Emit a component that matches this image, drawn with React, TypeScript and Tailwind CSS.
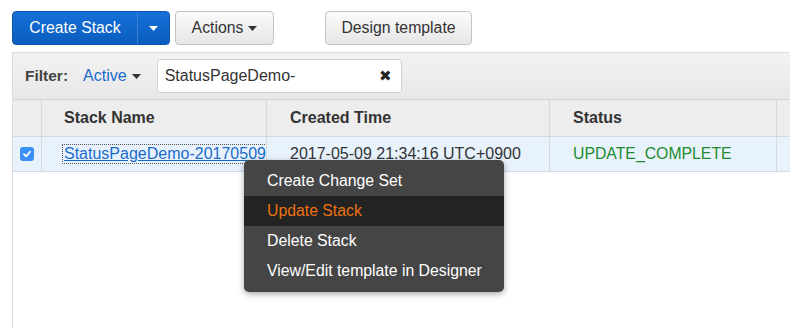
import React from "react";

function Caret({ color }: { color: string }) {
  return (
    <svg width="9" height="5" viewBox="0 0 9 5" className="inline-block">
      <path d="M0 0 L9 0 L4.5 5 Z" fill={color} />
    </svg>
  );
}

export default function App() {
  return (
    <div className="w-[790px] h-[328px] bg-white relative overflow-hidden font-['Liberation_Sans',Arial,sans-serif] text-[15.5px] text-[#333]">
      {/* Toolbar */}
      <div className="flex items-center pt-[11px] pl-[12px] h-[34px] box-content">
        <div className="flex h-[34px] w-[158px] rounded-[4px] bg-gradient-to-b from-[#1570d6] to-[#0a5dbf] border border-[#0a56b0] text-white overflow-hidden">
          <div className="w-[125px] flex items-center justify-center text-[15.8px] border-r border-[#3b7fd0]">Create Stack</div>
          <div className="flex-1 flex items-center justify-center">
            <Caret color="#ffffff" />
          </div>
        </div>
        <div className="ml-[5px] flex h-[34px] w-[99px] items-center justify-center gap-[5px] rounded-[4px] border border-[#c4c4c4] bg-gradient-to-b from-[#fbfbfb] to-[#e6e6e6] text-[15.8px] text-[#333]">
          Actions <Caret color="#333333" />
        </div>
        <div className="ml-[51px] flex h-[34px] w-[147px] items-center justify-center rounded-[4px] border border-[#c4c4c4] bg-gradient-to-b from-[#fbfbfb] to-[#e6e6e6] text-[15.8px] text-[#333]">
          Design template
        </div>
      </div>

      {/* Panel */}
      <div className="mt-[7px] ml-[12px] border-l border-[#dcdcdc] h-[276px]">
        {/* Filter bar */}
        <div className="h-[48px] flex items-center bg-gradient-to-b from-[#f2f2f2] to-[#e8e8e8] border-t border-[#dedede] border-b border-b-[#d6d6d6]">
          <span className="ml-[12px] font-bold text-[#444] text-[15.5px]">Filter:</span>
          <span className="ml-[15px] text-[#1a6ccb] flex items-center gap-[5px] text-[16px]">
            Active <Caret color="#333333" />
          </span>
          <div className="ml-[16px] h-[34px] w-[245px] bg-white border border-[#d2d2d2] rounded-[3px] flex items-center justify-between pl-[7px] pr-[9px] text-[#333] text-[16px]">
            <span>StatusPageDemo-</span>
            <span className="text-[15px] text-[#222]">✖</span>
          </div>
        </div>

        {/* Header */}
        <div className="flex h-[37px] bg-[#ededed] border-b border-[#d8d8d8] font-bold text-[#333] text-[16px]">
          <div className="w-[29px] border-r border-[#d8d8d8]" />
          <div className="w-[225px] border-r border-[#d8d8d8] flex items-center pl-[22px]">Stack Name</div>
          <div className="w-[283px] border-r border-[#d8d8d8] flex items-center pl-[23px]">Created Time</div>
          <div className="w-[227px] border-r border-[#d8d8d8] flex items-center pl-[23px]">Status</div>
          <div className="flex-1" />
        </div>

        {/* Row */}
        <div className="flex h-[35px] bg-[#e8f2fd] border-b border-[#d0dcea] text-[16px]">
          <div className="w-[29px] border-r border-[#d8d8d8] flex items-center pl-[7px]">
            <div className="w-[14px] h-[14px] rounded-[3px] bg-[#3b8ff5] flex items-center justify-center">
              <svg width="10" height="10" viewBox="0 0 10 10">
                <path d="M2 5.2 L4.2 7.4 L8 2.8" stroke="#fff" strokeWidth="1.8" fill="none" strokeLinecap="round" strokeLinejoin="round" />
              </svg>
            </div>
          </div>
          <div className="w-[225px] border-r border-[#d8d8d8] flex items-center pl-[21px] overflow-hidden">
            <span className="whitespace-nowrap text-[#1a6ccb] underline decoration-[#1a6ccb] outline outline-1 outline-dotted outline-[#555] px-[1px] leading-[18px]">
              StatusPageDemo-20170509-x
            </span>
          </div>
          <div className="w-[283px] border-r border-[#d8d8d8] flex items-center pl-[23px] text-[#333]">2017-05-09 21:34:16 UTC+0900</div>
          <div className="w-[227px] border-r border-[#d8d8d8] flex items-center pl-[23px] text-[#1d8c2e] text-[15.8px]">UPDATE_COMPLETE</div>
          <div className="flex-1" />
        </div>
      </div>

      {/* Context menu */}
      <div className="absolute left-[244px] top-[160px] w-[260px] h-[132px] rounded-[5px] bg-[#454545] py-[6px] text-white text-[15.8px] shadow-[0_2px_6px_rgba(0,0,0,0.35)]">
        <div className="h-[30px] flex items-center pl-[23px]">Create Change Set</div>
        <div className="h-[30px] flex items-center pl-[23px] bg-[#232323] text-[#ec7211]">Update Stack</div>
        <div className="h-[30px] flex items-center pl-[23px]">Delete Stack</div>
        <div className="h-[30px] flex items-center pl-[23px]">View/Edit template in Designer</div>
      </div>
    </div>
  );
}
